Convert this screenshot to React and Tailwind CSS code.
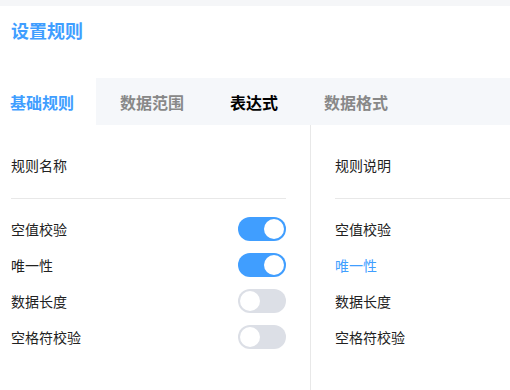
import React, { useState } from 'react';

const rules = [
  { key: 'empty', label: '空值校验', on: true },
  { key: 'unique', label: '唯一性', on: true },
  { key: 'length', label: '数据长度', on: false },
  { key: 'space', label: '空格符校验', on: false }
];

const Toggle = ({ on, onClick }) => (
  <button
    onClick={onClick}
    className={`relative w-[48px] h-[24px] rounded-full ${on ? 'bg-[#409eff]' : 'bg-[#dcdfe6]'}`}
  >
    <span
      className={`absolute top-[2px] w-[20px] h-[20px] rounded-full bg-white ${on ? 'left-[26px]' : 'left-[2px]'}`}
    />
  </button>
);

const App = () => {
  const [values, setValues] = useState(
    Object.fromEntries(rules.map(r => [r.key, r.on]))
  );

  return (
    <div
      className="w-full h-[390px] bg-white overflow-hidden text-[#222]"
      style={{ fontFamily: '"Noto Sans CJK SC", "Noto Sans", sans-serif' }}
    >
      <div className="h-[6px] bg-[#f5f6f8]" />
      <div className="pl-[11px] pt-[12px] text-[18px] leading-[24px] font-bold text-[#409eff]">
        设置规则
      </div>

      <div className="mt-[36px] h-[47px] flex items-center bg-[#f5f7fa] text-[16px] font-bold">
        <div className="w-[96px] h-full flex items-center pl-[10px] bg-white text-[#409eff]">基础规则</div>
        <div className="pl-[24px] pr-[23px] text-[#888]">数据范围</div>
        <div className="px-[23px] text-black">表达式</div>
        <div className="px-[23px] text-[#888]">数据格式</div>
      </div>

      <div className="flex h-[265px] text-[14px]">
        <div className="w-[311px] border-r border-[#e8e8e8] pl-[11px] pr-[24px] pt-[28px]">
          <div className="leading-[24px]">规则名称</div>
          <div className="mt-[21px] h-px bg-[#e8e8e8]" />
          <div className="mt-[18px] flex flex-col gap-[12px]">
            {rules.map(r => (
              <div key={r.key} className="h-[24px] flex items-center justify-between">
                <span>{r.label}</span>
                <Toggle
                  on={values[r.key]}
                  onClick={() => setValues({ ...values, [r.key]: !values[r.key] })}
                />
              </div>
            ))}
          </div>
        </div>

        <div className="flex-1 pl-[24px] pt-[28px]">
          <div className="leading-[24px]">规则说明</div>
          <div className="mt-[21px] h-px bg-[#e8e8e8]" />
          <div className="mt-[18px] flex flex-col gap-[12px]">
            {rules.map(r => (
              <div
                key={r.key}
                className={`h-[24px] flex items-center ${r.key === 'unique' ? 'text-[#409eff]' : ''}`}
              >
                {r.label}
              </div>
            ))}
          </div>
        </div>
      </div>
    </div>
  );
};

export default App;
